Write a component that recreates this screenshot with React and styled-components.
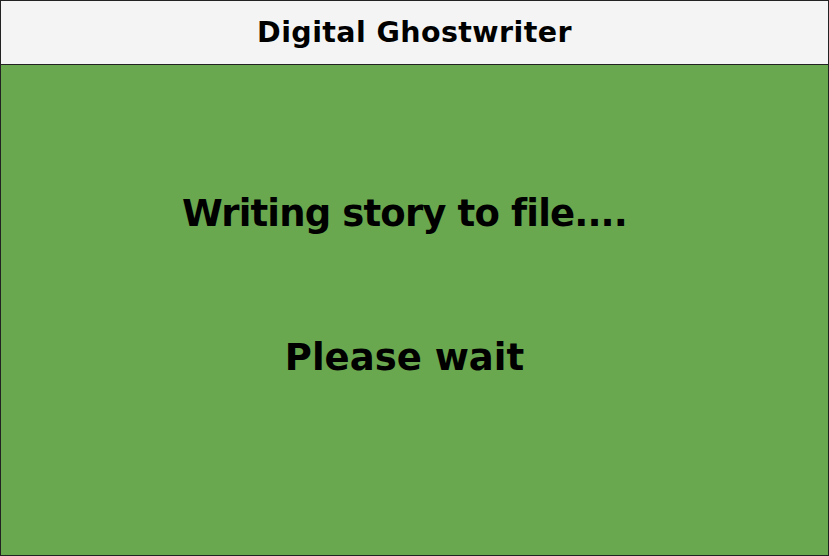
import React from "react"
import styled, { createGlobalStyle } from "styled-components"

const GlobalStyle = createGlobalStyle`
  html, body {
    margin: 0;
    padding: 0;
    background: #ffffff;
  }
  * {
    box-sizing: border-box;
  }
`

const Frame = styled.div`
  width: 829px;
  height: 556px;
  border: 1px solid #222222;
  display: flex;
  flex-direction: column;
  font-family: "DejaVu Sans", "Liberation Sans", sans-serif;
  color: #000000;
`

const Header = styled.header`
  height: 64px;
  flex: none;
  background: #f4f4f4;
  border-bottom: 1px solid #222222;
  display: flex;
  align-items: center;
  justify-content: center;
`

const Title = styled.h1`
  margin: 0;
  font-size: 28.5px;
  font-weight: 700;
  letter-spacing: 0.4px;
`

const Body = styled.main`
  flex: 1;
  background: #6aa84f;
  display: flex;
  flex-direction: column;
  align-items: center;
  padding: 124px 20px 0 0;
  gap: 94px;
`

const Message = styled.p`
  margin: 0;
  font-size: 37px;
  font-weight: 700;
  line-height: 50px;
  letter-spacing: ${props => props.$tracking || 0}px;
`

const App = () => (
  <>
    <GlobalStyle />
    <Frame>
      <Header>
        <Title>Digital Ghostwriter</Title>
      </Header>
      <Body>
        <Message $tracking={-0.85}>Writing story to file....</Message>
        <Message>Please wait</Message>
      </Body>
    </Frame>
  </>
)

export default App
